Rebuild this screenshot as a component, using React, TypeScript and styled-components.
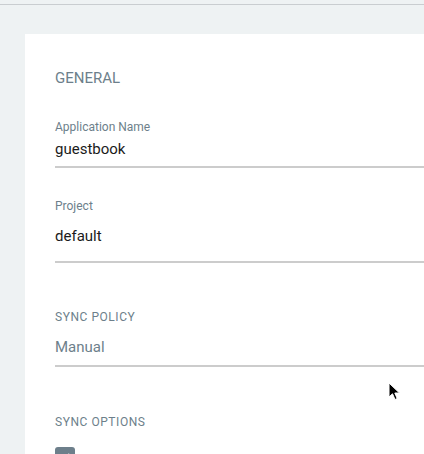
import React from 'react';
import styled, { createGlobalStyle } from 'styled-components';

const GlobalStyle = createGlobalStyle`
  html, body {
    margin: 0;
    padding: 0;
    background: #eef2f3;
    font-family: Roboto, "Liberation Sans", Arial, sans-serif;
    overflow: hidden;
    scrollbar-width: none;
  }
  ::-webkit-scrollbar { display: none; width: 0; height: 0; }
  * { box-sizing: border-box; }
`;

const Page = styled.div`
  position: relative;
  width: 100%;
  height: 454px;
  overflow: hidden;
`;

const TopBar = styled.div`
  height: 5px;
  border-bottom: 1px solid #c9cdd0;
`;

const Content = styled.div`
  padding: 29px 0 0 25px;
`;

const Card = styled.div`
  width: 640px;
  min-height: 520px;
  background: #ffffff;
  padding: 34px 0 0 30px;
`;

const SectionTitle = styled.div`
  font-size: 15px;
  line-height: 20px;
  color: #6d7f8b;
  text-transform: uppercase;
`;

const Field = styled.div<{ $gap: number }>`
  margin-top: ${(p) => p.$gap}px;
`;

const Label = styled.div<{ $upper?: boolean }>`
  font-size: 12px;
  line-height: 16px;
  color: #6d7f8b;
  text-transform: ${(p) => (p.$upper ? 'uppercase' : 'none')};
  letter-spacing: ${(p) => (p.$upper ? '0.55px' : 'normal')};
`;

const Value = styled.div<{ $gap: number; $pad: number; $muted?: boolean }>`
  margin-top: ${(p) => p.$gap}px;
  padding-bottom: ${(p) => p.$pad}px;
  font-size: 15px;
  line-height: 20px;
  color: ${(p) => (p.$muted ? '#6d7f8b' : '#1b1b1b')};
  border-bottom: 2px solid #cccccc;
`;

const Checkbox = styled.div`
  margin-top: 17px;
  width: 20px;
  height: 20px;
  border-radius: 3px;
  background: #6d7f8b;
  display: flex;
  align-items: center;
  justify-content: center;
`;

const Cursor = styled.svg`
  position: absolute;
  left: 388px;
  top: 382px;
`;

export default function App() {
  return (
    <Page>
      <GlobalStyle />
      <TopBar />
      <Content>
        <Card>
          <SectionTitle>General</SectionTitle>
          <Field $gap={31}>
            <Label>Application Name</Label>
            <Value $gap={4} $pad={7}>guestbook</Value>
          </Field>
          <Field $gap={30}>
            <Label>Project</Label>
            <Value $gap={12} $pad={15}>default</Value>
          </Field>
          <Field $gap={46}>
            <Label $upper>Sync Policy</Label>
            <Value $gap={12} $pad={8} $muted>Manual</Value>
          </Field>
          <Field $gap={47}>
            <Label $upper>Sync Options</Label>
            <Checkbox>
              <svg width="12" height="12" viewBox="0 0 12 12">
                <path d="M2 6.5 L5 9.5 L10.5 3" stroke="#fff" strokeWidth="2" fill="none" />
              </svg>
            </Checkbox>
          </Field>
        </Card>
      </Content>
      <Cursor width="14" height="20" viewBox="0 0 14 20">
        <path d="M1 1 L1 15 L4.5 11.8 L7 17.5 L9.2 16.5 L6.8 11 L11.5 11 Z" fill="#000" stroke="#fff" strokeWidth="1" />
      </Cursor>
    </Page>
  );
}
